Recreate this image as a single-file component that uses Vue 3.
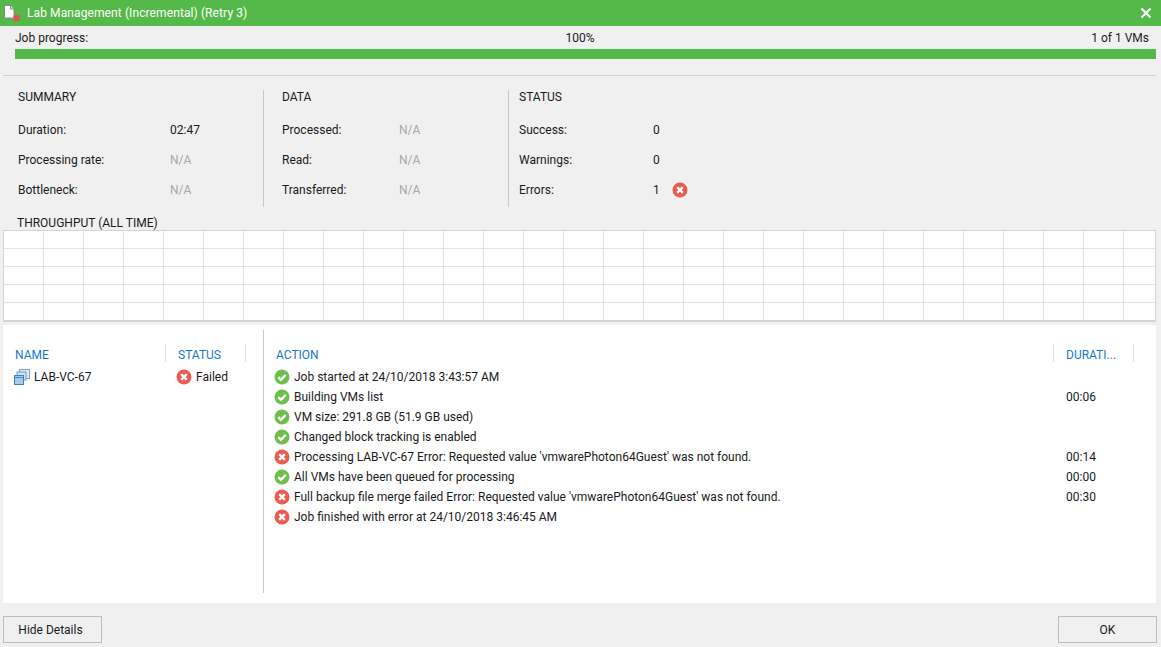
<script setup>
const summary = [
  { label: 'Duration:', value: '02:47', muted: false },
  { label: 'Processing rate:', value: 'N/A', muted: true },
  { label: 'Bottleneck:', value: 'N/A', muted: true }
]
const data = [
  { label: 'Processed:', value: 'N/A' },
  { label: 'Read:', value: 'N/A' },
  { label: 'Transferred:', value: 'N/A' }
]
const status = [
  { label: 'Success:', value: '0' },
  { label: 'Warnings:', value: '0' },
  { label: 'Errors:', value: '1', error: true }
]
const actions = [
  { ok: true, text: 'Job started at 24/10/2018 3:43:57 AM', time: '' },
  { ok: true, text: 'Building VMs list', time: '00:06' },
  { ok: true, text: 'VM size: 291.8 GB (51.9 GB used)', time: '' },
  { ok: true, text: 'Changed block tracking is enabled', time: '' },
  { ok: false, text: "Processing LAB-VC-67 Error: Requested value 'vmwarePhoton64Guest' was not found.", time: '00:14' },
  { ok: true, text: 'All VMs have been queued for processing', time: '00:00' },
  { ok: false, text: "Full backup file merge failed Error: Requested value 'vmwarePhoton64Guest' was not found.", time: '00:30' },
  { ok: false, text: 'Job finished with error at 24/10/2018 3:46:45 AM', time: '' }
]
</script>

<template>
  <div class="window">
    <header class="titlebar">
      <svg class="app-icon" width="18" height="18" viewBox="0 0 18 18">
        <path d="M1.500 1.500h6l3.500 3.500v9H1.500z" fill="#fff" stroke="#8a8a8a" stroke-width="1" />
        <path d="M7.500 1.500V5H11" fill="#ddd" stroke="#8a8a8a" stroke-width="1" />
        <path d="M11 11.500l5 5M16 11.500l-5 5" stroke="#ea4f4f" stroke-width="3" />
      </svg>
      <span class="title">Lab Management (Incremental) (Retry 3)</span>
      <svg class="close" width="12" height="12" viewBox="0 0 12 12">
        <path d="M1.500 1.500l9 9M10.500 1.500l-9 9" stroke="#fff" stroke-width="2.200" />
      </svg>
    </header>

    <section class="progress">
      <div class="progress-labels">
        <span>Job progress:</span>
        <span class="pct">100%</span>
        <span>1 of 1 VMs</span>
      </div>
      <div class="bar"></div>
    </section>

    <section class="stats">
      <div class="col col-summary">
        <h3>SUMMARY</h3>
        <div v-for="r in summary" :key="r.label" class="stat">
          <span class="k">{{ r.label }}</span>
          <span :class="['v', { muted: r.muted }]">{{ r.value }}</span>
        </div>
      </div>
      <div class="col col-data">
        <h3>DATA</h3>
        <div v-for="r in data" :key="r.label" class="stat">
          <span class="k">{{ r.label }}</span>
          <span class="v muted">{{ r.value }}</span>
        </div>
      </div>
      <div class="col col-status">
        <h3>STATUS</h3>
        <div v-for="r in status" :key="r.label" class="stat">
          <span class="k">{{ r.label }}</span>
          <span class="v">{{ r.value }}</span>
          <svg v-if="r.error" class="err-icon" width="16" height="16" viewBox="0 0 16 16">
            <circle cx="8" cy="8" r="7.500" fill="#ec5b4e" />
            <path d="M5.200 5.200l5.600 5.600M10.800 5.200l-5.600 5.600" stroke="#fff" stroke-width="2.400" />
          </svg>
        </div>
      </div>
    </section>

    <h3 class="chart-title">THROUGHPUT (ALL TIME)</h3>
    <div class="chart"></div>

    <section class="details">
      <div class="vms">
        <div class="thead">
          <span class="th th-name">NAME</span>
          <span class="th th-status">STATUS</span>
        </div>
        <div class="vm-row">
          <span class="vm-name">
            <svg width="18" height="18" viewBox="0 0 18 18">
              <rect x="6.500" y="1.500" width="10" height="9" fill="#dbe8f4" stroke="#7ea6cc" />
              <rect x="4" y="4" width="9" height="8" fill="#cfe0f0" stroke="#6f9fca" />
              <rect x="1.500" y="7.500" width="9" height="9" fill="#a9cbe8" stroke="#3f85bd" />
              <path d="M1.500 9.500h9" stroke="#3f85bd" />
            </svg>
            LAB-VC-67
          </span>
          <span class="vm-status">
            <svg width="16" height="16" viewBox="0 0 16 16">
              <circle cx="8" cy="8" r="7.500" fill="#ec5b4e" />
              <path d="M5.200 5.200l5.600 5.600M10.800 5.200l-5.600 5.600" stroke="#fff" stroke-width="2.400" />
            </svg>
            Failed
          </span>
        </div>
      </div>
      <div class="log">
        <div class="thead">
          <span class="th th-action">ACTION</span>
          <span class="th th-dur">DURATI...</span>
        </div>
        <div v-for="a in actions" :key="a.text" class="log-row">
          <svg width="16" height="16" viewBox="0 0 16 16">
            <template v-if="a.ok">
              <circle cx="8" cy="8" r="7.500" fill="#6cbf4b" />
              <path d="M4.300 8.200l2.600 2.600 4.800-5" fill="none" stroke="#fff" stroke-width="2.400" />
            </template>
            <template v-else>
              <circle cx="8" cy="8" r="7.500" fill="#ec5b4e" />
              <path d="M5.200 5.200l5.600 5.600M10.800 5.200l-5.600 5.600" stroke="#fff" stroke-width="2.400" />
            </template>
          </svg>
          <span class="log-text">{{ a.text }}</span>
          <span class="log-time">{{ a.time }}</span>
        </div>
      </div>
    </section>

    <footer class="footer">
      <button class="btn btn-details">Hide Details</button>
      <button class="btn">OK</button>
    </footer>
  </div>
</template>

<style>
html, body {
  margin: 0;
  background: #f0f0f0;
}
</style>

<style scoped>
.window {
  width: 1161px;
  height: 647px;
  overflow: hidden;
  background: #f0f0f0;
  color: #1a1a1a;
  font-family: Roboto, "Noto Sans", sans-serif;
  font-size: 12px;
  line-height: 16px;
}

.titlebar {
  height: 26px;
  background: #54b948;
  display: flex;
  align-items: center;
  padding: 0 9px 0 3px;
  color: #fff;
  font-size: 12px;
  letter-spacing: 0.1px;
}
.app-icon { margin-right: 6px; }
.title { flex: 1; }

.progress {
  margin: 0 5px 0 3px;
  height: 49px;
  border-bottom: 1px solid #d0d0d0;
}
.progress-labels {
  display: grid;
  grid-template-columns: 1fr auto 1fr;
  padding: 4px 7px 0 12px;
}
.progress-labels span:last-child { text-align: right; }
.pct { margin-right: 4px; }
.bar {
  height: 10px;
  margin: 3px 0 0 12px;
  background: #54b948;
}

.stats {
  display: flex;
  height: 117px;
  margin-top: 14px;
}
h3 {
  margin: 0;
  font-size: 12px;
  font-weight: 400;
  line-height: 16px;
}
.col { padding-left: 18px; }
.col h3 { margin-top: -1px; }
.col-summary { width: 245px; }
.col-data {
  width: 226px;
  border-left: 1px solid #c8c8c8;
}
.col-status {
  flex: 1;
  padding-left: 10px;
  border-left: 1px solid #c8c8c8;
}
.stat {
  display: flex;
  align-items: center;
  height: 16px;
  margin-top: 14px;
}
.col h3 + .stat { margin-top: 17px; }
.k { width: 152px; }
.col-data .k { width: 117px; }
.col-status .k { width: 134px; }
.muted { color: #a8a8a8; }
.err-icon { margin-left: 12px; }

.chart-title {
  margin: 8px 0 0 17px;
}
.chart {
  box-sizing: border-box;
  width: 1153px;
  height: 92px;
  margin: -1px 0 0 3px;
  background-color: #fff;
  background-image:
    linear-gradient(to right, #e4e4e4 1px, transparent 1px),
    linear-gradient(to bottom, #e4e4e4 1px, transparent 1px);
  background-size: 40px 100%, 100% 18px;
  background-position: 39px 0, 0 17px;
  border: 1px solid #d4d4d4;
  border-bottom-width: 2px;
}

.details {
  display: flex;
  width: 1153px;
  height: 278px;
  margin: 3px 0 0 3px;
  background: #fff;
  padding: 5px 0 10px;
  box-sizing: border-box;
}
.vms {
  width: 260px;
  border-right: 1px solid #c8c8c8;
  flex: none;
}
.log { flex: 1; }
.thead {
  display: flex;
  align-items: center;
  height: 18px;
  margin-top: 14px;
}
.th {
  color: #1878c8;
  height: 18px;
  line-height: 23px;
  box-sizing: border-box;
}
.th-name {
  width: 163px;
  padding-left: 12px;
  border-right: 1px solid #e2e2e2;
}
.th-status {
  width: 80px;
  padding-left: 12px;
  border-right: 1px solid #e2e2e2;
}
.th-action {
  width: 790px;
  padding-left: 12px;
  border-right: 1px solid #e2e2e2;
}
.th-dur {
  width: 80px;
  padding-left: 12px;
  border-right: 1px solid #e2e2e2;
}

.vm-row {
  display: flex;
  align-items: center;
  height: 20px;
  margin-top: 5px;
}
.vm-name {
  display: flex;
  align-items: center;
  gap: 3px;
  width: 161px;
  padding-left: 10px;
  box-sizing: border-box;
}
.vm-status {
  display: flex;
  align-items: center;
  gap: 4px;
  padding-left: 12px;
}

.log-row {
  display: flex;
  align-items: center;
  height: 20px;
  padding-left: 10px;
}
.thead + .log-row { margin-top: 5px; }
.log-text {
  width: 772px;
  margin-left: 4px;
  white-space: nowrap;
}

.footer {
  display: flex;
  justify-content: space-between;
  width: 1154px;
  margin: 13px 0 0 3px;
}
.btn {
  width: 99px;
  height: 27px;
  padding: 0;
  background: #f0f0f0;
  border: 1px solid #bdbdbd;
  border-radius: 0;
  color: #1a1a1a;
  font: inherit;
}
.btn-details { padding-right: 4px; }
</style>
